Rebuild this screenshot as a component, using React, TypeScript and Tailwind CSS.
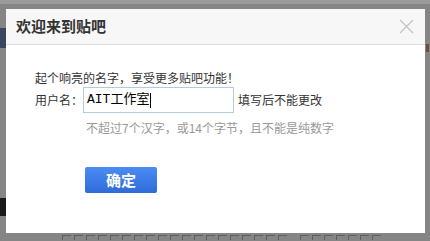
import React from "react";

const cjk = { fontFamily: '"Noto Sans CJK SC", "Noto Sans", sans-serif' };

const marks = [62, 74, 86, 98, 110, 122, 134, 146, 158, 170, 182, 194, 206, 218, 230, 242, 254, 266, 278, 300, 312, 324, 336, 348, 360, 372];

export default function App() {
  return (
    <div
      className="relative w-[430px] h-[241px] overflow-hidden bg-[#858585]"
      style={cjk}
    >
      {/* background page hints */}
      <div className="absolute left-0 top-0 w-[430px] h-[4px] bg-[#9a9a9a]" />
      <div className="absolute left-0 top-[28px] w-[6px] h-[20px] bg-[#3a4560]" />
      <div className="absolute left-0 top-[198px] w-[6px] h-[18px] bg-[#1a1a1a]" />
      {marks.map((x) => (
        <div
          key={x}
          className="absolute top-[235px] w-[9px] h-[5px] border-t border-l border-[#5f5f5f]"
          style={{ left: x }}
        />
      ))}
      <div className="absolute left-[426px] top-[44px] w-[3px] h-[8px] bg-[#6a5040]" />

      <div className="absolute left-[6px] top-[9px] w-[419px] h-[224px] bg-white flex flex-col">
        <div className="h-[36px] bg-[#f7f7f7] border-b border-[#dcdcdc] flex items-center justify-between pl-[10px] pr-[11px]">
          <span className="text-[15px] font-bold text-[#333]">欢迎来到贴吧</span>
          <svg width="15" height="15" viewBox="0 0 15 15">
            <path d="M1 1 L14 14 M14 1 L1 14" stroke="#c4c4c4" strokeWidth="1.3" fill="none" />
          </svg>
        </div>
        <div className="flex flex-col pl-[29px] text-[12px] text-[#333]">
          <div className="mt-[24px] leading-[18px]">起个响亮的名字，享受更多贴吧功能！</div>
          <div className="flex items-center h-[26px]">
            <span className="w-[48px]">用户名：</span>
            <div className="w-[151px] h-[26px] border border-[#b6cbd9] flex items-center pl-[3px] text-[13px] text-black">
              <span style={{ fontFamily: '"Liberation Mono", "Noto Sans CJK SC", monospace' }}>AIT工作室</span>
              <span className="w-[1px] h-[15px] bg-black ml-[1px]" />
            </div>
            <span className="ml-[4px]">填写后不能更改</span>
          </div>
          <div className="mt-[6px] ml-[51px] leading-[18px] text-[#999]">
            不超过7个汉字，或14个字节，且不能是纯数字
          </div>
          <button className="mt-[30px] ml-[50px] w-[72px] h-[26px] rounded-[2px] bg-gradient-to-b from-[#4b8cf2] to-[#2f6bd9] text-white text-[15px] font-bold flex items-center justify-center">
            确定
          </button>
        </div>
      </div>
    </div>
  );
}
